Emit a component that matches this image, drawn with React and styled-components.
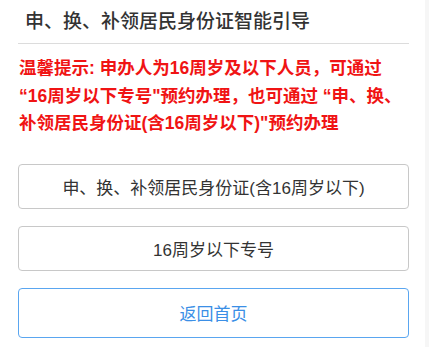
import styled, { createGlobalStyle } from "styled-components";

// 身份证智能引导页：标题、温馨提示、两个预约入口和返回按钮

const GlobalStyle = createGlobalStyle`
    html, body {
        margin: 0;
        padding: 0;
        background: #f6f6f6;
    }
    body {
        font-family: "Liberation Sans", "Noto Sans CJK SC", sans-serif;
    }
`

const App = () => {
    return (
        <>
            <GlobalStyle />
            <Page>
                <Header>
                    <Title>申、换、补领居民身份证智能引导</Title>
                </Header>
                <Notice>
                    温馨提示: 申办人为16周岁及以下人员，可通过<br />
                    “16周岁以下专号"预约办理，也可通过 “申、换、<br />
                    补领居民身份证(含16周岁以下)"预约办理
                </Notice>
                <Buttons>
                    <OptionButton>申、换、补领居民身份证(含16周岁以下)</OptionButton>
                    <OptionButton>16周岁以下专号</OptionButton>
                    <OptionButton primary>返回首页</OptionButton>
                </Buttons>
            </Page>
        </>
    );
}

const Page = styled.div`
    width: 425px;
    min-height: 347px;
    background: #fff;
    box-sizing: border-box;
    padding: 0 16px 0 18px;
`

const Header = styled.div`
    height: 43px;
    border-bottom: 1px solid #dcdcdc;
    display: flex;
    align-items: center;
    padding-left: 7px;
`

const Title = styled.h1`
    margin: 0;
    font-size: 19px;
    font-weight: 500;
    color: #333;
    line-height: 43px;
`

const Notice = styled.p`
    margin: 11px -4px 0 1px;
    color: #f01414;
    font-size: 17.5px;
    font-weight: 700;
    line-height: 27.5px;
    white-space: nowrap;
`

const Buttons = styled.div`
    display: flex;
    flex-direction: column;
    gap: 17px;
    margin-top: 26px;
`

const OptionButton = styled.button`
    width: 100%;
    height: ${props => props.primary ? '50px' : '45px'};
    background: #fff;
    border: 1px solid ${props => props.primary ? '#5aa6f0' : '#c8c8c8'};
    border-radius: 4px;
    font-family: inherit;
    font-size: 17px;
    color: ${props => props.primary ? '#3b8fe6' : '#333'};
    padding: 0;
    cursor: pointer;
`

export default App;
